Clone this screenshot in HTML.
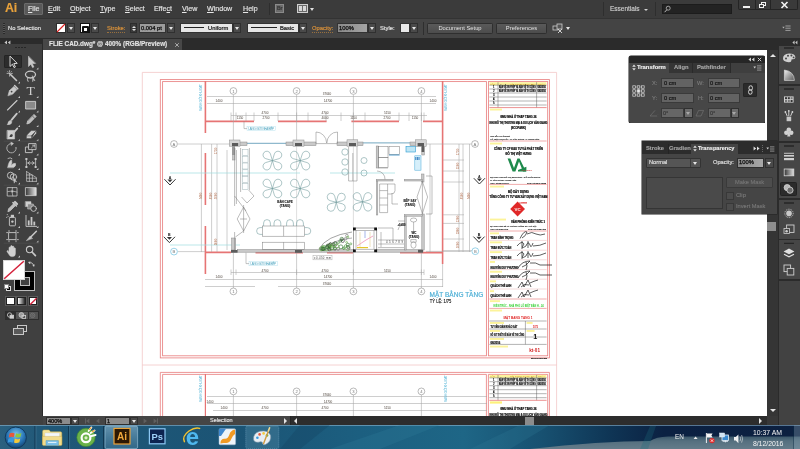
<!DOCTYPE html>
<html lang="vi"><head><meta charset="utf-8"><title>FLIE CAD.dwg @ 400% (RGB/Preview)</title>
<style>
html,body{margin:0;padding:0}
body{-webkit-font-smoothing:antialiased;width:800px;height:449px;overflow:hidden;position:relative;background:#fff;font-family:"Liberation Sans",sans-serif;color:#d6d6d6}
.a{position:absolute}
.t{position:absolute;white-space:nowrap;line-height:1;-webkit-text-stroke:0.14px}
#menubar{left:0;top:0;width:800px;height:18px;background:#3b3b3b}
#ctrl{left:0;top:18px;width:800px;height:20px;background:#444;border-top:1px solid #333;box-sizing:border-box}
#tabbar{left:0;top:38px;width:800px;height:12px;background:#2b2b2b}
#tools{left:0;top:44px;width:43px;height:381px;background:#404040}
#canvas{left:43px;top:50px;width:724px;height:366px;background:#fff;overflow:hidden}
#canvas svg,.t,.btn,svg.a{will-change:transform}
#vscroll{left:767px;top:50px;width:11px;height:375px;background:#353535}
#dock{left:778px;top:38px;width:22px;height:387px;background:#2b2b2b}
#hscroll{left:43px;top:416px;width:724px;height:9px;background:#2d2d2d}
#taskbar{left:0;top:425px;width:800px;height:24px;background:linear-gradient(90deg,#2b607f 0%,#1f5777 6%,#1b5475 30%,#1c5f80 45%,#1e6686 58%,#175070 68%,#0f3656 76%,#0b2142 83%,#0c2040 100%)}
.mi{font-size:7.1px;color:#e6e6e6;top:5.6px}
.mi u{text-decoration-thickness:0.6px;text-underline-offset:1px}
.dd{background:#4a4a4a;border:1px solid #303030;box-sizing:border-box}
.dd:after{content:"";position:absolute;left:50%;top:50%;margin:-1px 0 0 -2.5px;border:2.5px solid transparent;border-top:3px solid #e6e6e6;border-bottom:0}
.dg:after{border-top-color:#a8a8a8}
.btn{background:linear-gradient(#5a5a5a,#4c4c4c);border:1px solid #2f2f2f;box-sizing:border-box;border-radius:1.5px;font-size:5.8px;color:#e2e2e2;text-align:center}
.fld{background:#3a3a3a;border:1px solid #2e2e2e;box-sizing:border-box;font-size:5.7px;color:#aaa}
.pnl{background:#464646}
</style></head><body>

<!-- ================= canvas with drawing ================= -->
<div class="a" id="canvas">
<svg width="724" height="366" viewBox="43 50 724 366" style="position:absolute;left:0;top:0">
<g fill="none" stroke="#f3c6c6" stroke-width="0.8">
<path d="M142.3 72.4H556.6M142.3 72.4V416M556.6 72.4V416M142.3 365H556.6"/>
</g>
<g fill="none" stroke="#e88282" stroke-width="0.85">
<rect x="160.3" y="79.6" width="389.1" height="278.3"/>
<rect x="162.6" y="81.6" width="323.8" height="274.2"/>
<rect x="488.4" y="81.6" width="59.3" height="274.2"/>
<path d="M160.3 416V372.4H549.4V416M162.6 416V374.4H486.4V416M488.4 416V374.4H547.7V416"/>
</g>
<g fill="none" stroke="#e67474" stroke-width="1.6">
<path d="M205.4 81V133M205.4 153V205M205.4 226V274"/>
<path d="M205.4 121.4H254M278 121.4H326.6M351.4 121.4H399M423 121.4H442.6"/>
<path d="M442.6 81V264"/>
<path d="M205.4 252.4H231M255.5 252.6H303M327 252.6H353M400 252.6H442.6"/>
</g>
<path d="M205.4 374V416" stroke="#e67474" stroke-width="1.2" fill="none"/>
<g fill="none" stroke="#a6a6a6" stroke-width="0.55">
<path d="M207 96.5H436M207 103.5H436M231 115.5H427"/>
<path d="M231 272.5H424M205 279.5H443M205 286.5H255M278 286.5H443"/>
<path d="M207 396.5H487M207 403.5H487M213 410.5H487"/>
<path d="M233.4 95V141M233.4 253V288M233.4 395V416"/>
<path d="M296.6 95V141M296.6 253V288M296.6 395V416"/>
<path d="M353.4 95V141M353.4 253V288M353.4 395V416"/>
<path d="M421.4 95V141M421.4 253V288M421.4 395V416"/>
<path d="M296.6 141V253M353.4 141V228" stroke="#c4c4c4"/>
<path d="M178 144H231M178 251.6H205M426 144H471M426 251.4H471"/>
<path d="M201.4 144V252M211.6 144V252M217 144V252M227 150V250"/>
<path d="M459 144V252M463 144V252M469.5 144V252M430 144V252"/>
<path d="M443 214.8H464M443 223.4H464M443 239H464M443 250.6H472M443 160H464M443 182H464M443 171H464"/>
<path d="M442.6 264V287"/>
<path d="M231 112.5V121"/>
<path d="M236 112.5V121"/>
<path d="M246 112.5V121"/>
<path d="M254 112.5V121"/>
<path d="M278 112.5V121"/>
<path d="M296.6 112.5V121"/>
<path d="M308 112.5V121"/>
<path d="M326 112.5V121"/>
<path d="M341 112.5V121"/>
<path d="M353.4 112.5V121"/>
<path d="M365 112.5V121"/>
<path d="M399 112.5V121"/>
<path d="M409 112.5V121"/>
<path d="M421.4 112.5V121"/>
<path d="M424 112.5V121"/>
<path d="M231 269.5V275"/>
<path d="M236 269.5V275"/>
<path d="M296.6 269.5V275"/>
<path d="M353.4 269.5V275"/>
<path d="M421.4 269.5V275"/>
<path d="M424 269.5V275"/>
</g>
<g fill="none" stroke="#9fdde0" stroke-width="0.7">
<path d="M170 173H300M330 173H395M170 245H240"/>
</g>
<g fill="none" stroke="#58b6d8" stroke-width="0.8">
<path d="M247 143.3H286M363 142.8H410" stroke="#8fb9cd" stroke-width="1.3"/>
<rect x="249" y="261.6" width="28.4" height="4.2" stroke-width="0.4" stroke="#a8dcec"/>
<rect x="247" y="126.5" width="28.4" height="4.2" stroke-width="0.4" stroke="#a8dcec"/>
</g>
<path d="M244 121.4V128.6H247M246 252.6V263.6H249" fill="none" stroke="#888" stroke-width="0.5"/>
<rect x="313" y="255.6" width="19" height="4.2" fill="none" stroke="#aaa" stroke-width="0.5"/>
<g fill="#fff" stroke="#8c8c8c" stroke-width="0.6">
<circle cx="233.4" cy="91" r="3.4"/>
<circle cx="233.4" cy="291.4" r="3.4"/>
<circle cx="233.4" cy="391.4" r="3.4"/>
<circle cx="296.6" cy="91" r="3.4"/>
<circle cx="296.6" cy="291.4" r="3.4"/>
<circle cx="296.6" cy="391.4" r="3.4"/>
<circle cx="353.4" cy="91" r="3.4"/>
<circle cx="353.4" cy="291.4" r="3.4"/>
<circle cx="353.4" cy="391.4" r="3.4"/>
<circle cx="421.4" cy="91" r="3.4"/>
<circle cx="421.4" cy="291.4" r="3.4"/>
<circle cx="421.4" cy="391.4" r="3.4"/>
<circle cx="174" cy="144" r="3.4"/><circle cx="475" cy="144" r="3.4"/>
<circle cx="174" cy="251.6" r="3.4" stroke="#58b6d8"/><circle cx="475.3" cy="251.2" r="3.4" stroke="#58b6d8"/>
</g>
<g font-family="Liberation Sans, sans-serif" font-size="4.2" fill="#777" text-anchor="middle">
<text x="233.4" y="92.5">1</text>
<text x="233.4" y="292.9">1</text>
<text x="233.4" y="392.9">1</text>
<text x="296.6" y="92.5">2</text>
<text x="296.6" y="292.9">2</text>
<text x="296.6" y="392.9">2</text>
<text x="353.4" y="92.5">3</text>
<text x="353.4" y="292.9">3</text>
<text x="353.4" y="392.9">3</text>
<text x="421.4" y="92.5">4</text>
<text x="421.4" y="292.9">4</text>
<text x="421.4" y="392.9">4</text>
<text x="174" y="145.5">A</text><text x="475" y="145.5">A</text><text x="174" y="253.1">B</text><text x="475.3" y="252.7">B</text>
</g>
<g transform="translate(170,180)"><path d="M-5.6 -0.8L0 5L5.6 -0.8" fill="none" stroke="#2a2a2a" stroke-width="0.95"/><path d="M-2.6 -0.6H2.6L0 2.2Z" fill="#333"/><text x="0" y="-1.4" font-size="3.6" font-weight="bold" text-anchor="middle" fill="#111" font-family="Liberation Sans, sans-serif">A</text></g>
<g transform="translate(169.4,237.6)"><path d="M-5.6 -0.8L0 5L5.6 -0.8" fill="none" stroke="#2a2a2a" stroke-width="0.95"/><path d="M-2.6 -0.6H2.6L0 2.2Z" fill="#333"/><text x="0" y="-1.4" font-size="3.6" font-weight="bold" text-anchor="middle" fill="#111" font-family="Liberation Sans, sans-serif">B</text></g>
<g transform="translate(479.4,179)"><path d="M-5.6 -0.8L0 5L5.6 -0.8" fill="none" stroke="#2a2a2a" stroke-width="0.95"/><path d="M-2.6 -0.6H2.6L0 2.2Z" fill="#333"/><text x="0" y="-1.4" font-size="3.6" font-weight="bold" text-anchor="middle" fill="#111" font-family="Liberation Sans, sans-serif">A</text></g>
<g transform="translate(479,237.4)"><path d="M-5.6 -0.8L0 5L5.6 -0.8" fill="none" stroke="#2a2a2a" stroke-width="0.95"/><path d="M-2.6 -0.6H2.6L0 2.2Z" fill="#333"/><text x="0" y="-1.4" font-size="3.6" font-weight="bold" text-anchor="middle" fill="#111" font-family="Liberation Sans, sans-serif">B</text></g>
<g fill="#c9c9c9" stroke="#8a8a8a" stroke-width="0.5">
<rect x="239" y="142" width="8" height="3.6"/><rect x="286" y="142" width="30" height="3.6"/>
<rect x="337" y="142" width="11" height="3.6"/><rect x="357" y="142" width="6" height="3.6"/><rect x="410" y="142" width="6" height="3.6"/>
<rect x="237.5" y="249.6" width="116" height="2.6"/><rect x="377" y="249.6" width="46" height="2.6"/>
<rect x="232.6" y="148" width="2.4" height="12"/><rect x="231.6" y="238" width="4" height="12"/>
<rect x="421.8" y="147" width="2.6" height="8"/><rect x="421.6" y="174" width="2.4" height="8"/><rect x="421.8" y="214" width="2.4" height="36"/>
<rect x="376.2" y="146" width="2.2" height="22"/><rect x="376.4" y="179.4" width="16.6" height="1.6"/><rect x="404.5" y="179.4" width="18" height="1.6"/>
<rect x="376.4" y="181" width="1.4" height="34"/>
<rect x="404.6" y="214.6" width="18" height="1.6"/><rect x="404.6" y="216" width="1.6" height="34"/>
</g>
<g fill="#d6d6d6" stroke="#8c8c8c" stroke-width="0.5">
<rect x="229.5" y="140" width="10.5" height="6.2"/>
<rect x="293" y="140" width="11" height="6.2"/>
<rect x="347" y="139.8" width="10.8" height="6.4"/>
<rect x="415.4" y="139.8" width="10.8" height="6.6"/>
</g>
<g fill="#5c5c5c" stroke="none">
<rect x="232" y="143" width="6.2" height="3"/>
<rect x="232" y="146" width="2.6" height="9"/>
<rect x="295" y="143" width="7" height="3"/>
<rect x="349" y="143" width="7" height="3"/>
<rect x="417.6" y="143" width="6.4" height="3.2"/>
<rect x="421.6" y="146" width="2.6" height="6"/>
<rect x="231" y="250" width="6.5" height="2.8"/>
<rect x="295" y="250" width="7" height="2.8"/>
<rect x="418" y="249.8" width="5" height="2.8"/>
</g>
<rect x="232" y="146" width="2.6" height="9" fill="#9a9a9a"/>
<g fill="none" stroke="#7a7a7a" stroke-width="0.5">
<path d="M234.6 148V206M236.4 150V204M234.6 232V250"/>
<path d="M316 143.6H337M316 132V143.6M337.5 132V143.6M316 132A10.6 11 0 0 1 326.6 143M337.5 132A10.6 11 0 0 0 326.9 143"/>
<path d="M243.6 207L237.2 219L243.6 231L250 219Z M243.6 205V233 M240 219H247"/>
<path d="M422.4 181.5L417 197L422.4 213.6L427.6 197Z M422.4 181V214"/>
<path d="M426 176H432V214H426"/>
<path d="M234.6 196L246 211 M248.6 190L254 196L247 203L241.6 197 M243.6 231L235.4 237"/>
<rect x="242.4" y="149.4" width="5.6" height="6" stroke="#9fb4b8"/>
<rect x="242.4" y="156.2" width="5.6" height="6" stroke="#9fb4b8"/>
<rect x="242.4" y="163.0" width="5.6" height="6" stroke="#9fb4b8"/>
<rect x="242.4" y="169.8" width="5.6" height="6" stroke="#9fb4b8"/>
<rect x="242.4" y="176.6" width="5.6" height="6" stroke="#9fb4b8"/>
<rect x="242.4" y="183.4" width="5.6" height="6" stroke="#9fb4b8"/>
<path d="M240.6 148V192M249.4 148V190"/>
<rect x="262.5" y="226" width="42.2" height="10.2"/><path d="M283.6 226V236.2"/>
<rect x="262.5" y="242.2" width="42.2" height="7.2"/><path d="M283.6 242.2V249.4"/>
<path d="M348.6 147V181H357V147 M352.8 153V181"/>
<rect x="378.6" y="146.4" width="9.4" height="11"/><rect x="378.6" y="157.4" width="9.4" height="10"/><rect x="389" y="146.4" width="10.6" height="8"/>
<path d="M378 168H388 M377 171A8 8 0 0 1 385 179.4"/>
<path d="M379.6 184H395V190.6Q395 194 391 194H387.6V212.6H379.6Z M387.6 184V194M379.6 190.6H387.6M379.6 198H387.6M379.6 205H387.6"/>
<path d="M392 193V204H398"/>
<ellipse cx="413.6" cy="220" rx="3.2" ry="2"/><path d="M410.8 239.6h5.4v2.6h-5.4z"/><ellipse cx="413.5" cy="245" rx="2.6" ry="3.2"/>
<path d="M413.6 222V232 M398 221H405 M404.6 224A8 8 0 0 0 398 230"/>
<path d="M378 228H393V240 M381 232V247M378 240H404 M378 244H404M378 247.6H404"/>
</g>
<text x="386" y="242.6" font-family="Liberation Sans, sans-serif" font-size="2.8" fill="#333" textLength="17">4 5 6 7 8 9</text>
<g fill="none" stroke="#6a9698" stroke-width="0.55">
<path d="M272.40 160.60L265.73 158.65A3.8 3.8 0 1 1 270.45 153.93Z"/><path d="M272.40 160.60L270.45 167.27A3.8 3.8 0 1 1 265.73 162.55Z"/><path d="M272.40 160.60L274.35 153.93A3.8 3.8 0 1 1 279.07 158.65Z"/><path d="M272.40 160.60L279.07 162.55A3.8 3.8 0 1 1 274.35 167.27Z"/>
<path d="M300.15 160.60L293.27 158.66A3.8 3.8 0 1 1 297.91 153.81Z"/><path d="M300.15 160.60L297.91 167.39A3.8 3.8 0 1 1 293.27 162.54Z"/><path d="M300.15 160.60L302.39 153.81A3.8 3.8 0 1 1 307.03 158.66Z"/><path d="M300.15 160.60L307.03 162.54A3.8 3.8 0 1 1 302.39 167.39Z"/>
<path d="M272.40 188.50L265.78 186.66A3.8 3.8 0 1 1 270.44 181.92Z"/><path d="M272.40 188.50L270.44 195.08A3.8 3.8 0 1 1 265.78 190.34Z"/><path d="M272.40 188.50L274.36 181.92A3.8 3.8 0 1 1 279.02 186.66Z"/><path d="M272.40 188.50L279.02 190.34A3.8 3.8 0 1 1 274.36 195.08Z"/>
<path d="M300.15 188.50L293.32 186.67A3.8 3.8 0 1 1 297.90 181.79Z"/><path d="M300.15 188.50L297.90 195.21A3.8 3.8 0 1 1 293.32 190.33Z"/><path d="M300.15 188.50L302.40 181.79A3.8 3.8 0 1 1 306.98 186.67Z"/><path d="M300.15 188.50L306.98 190.33A3.8 3.8 0 1 1 302.40 195.21Z"/>
<path d="M336.25 202.25L330.07 200.68A3.8 3.8 0 1 1 334.68 196.07Z"/><path d="M336.25 202.25L334.68 208.43A3.8 3.8 0 1 1 330.07 203.82Z"/><path d="M336.25 202.25L337.82 196.07A3.8 3.8 0 1 1 342.43 200.68Z"/><path d="M336.25 202.25L342.43 203.82A3.8 3.8 0 1 1 337.82 208.43Z"/>
<path d="M362.50 201.85L355.99 200.06A3.8 3.8 0 1 1 360.66 195.36Z"/><path d="M362.50 201.85L360.66 208.34A3.8 3.8 0 1 1 355.99 203.64Z"/><path d="M362.50 201.85L364.34 195.36A3.8 3.8 0 1 1 369.01 200.06Z"/><path d="M362.50 201.85L369.01 203.64A3.8 3.8 0 1 1 364.34 208.34Z"/>
<circle cx="345" cy="152" r="3.2"/>
<circle cx="345" cy="162" r="3.2"/>
<circle cx="345" cy="172" r="3.2"/>
<circle cx="364" cy="160.5" r="3"/>
<circle cx="364" cy="173" r="3"/>
<path d="M263.6 226V223A3.4 3.4 0 0 1 270.4 223V226"/>
<path d="M274.0 226V223A3.4 3.4 0 0 1 280.79999999999995 223V226"/>
<path d="M286.6 226V223A3.4 3.4 0 0 1 293.4 223V226"/>
<path d="M296.6 226V223A3.4 3.4 0 0 1 303.4 223V226"/>
<path d="M262.5 227.6H260A3.4 3.4 0 0 0 260 234.4H262.5 M304.7 227.6H307.4A3.4 3.4 0 0 1 307.4 234.4H304.7"/>
</g>
<rect x="406" y="146.6" width="9.4" height="5.4" fill="#bfe6f5" stroke="#2a9ad0" stroke-width="0.6"/>
<rect x="414.8" y="155.8" width="6.2" height="14.4" fill="#d6effa" stroke="#49a9d8" stroke-width="0.5"/>
<path d="M415.8 157v3M417.4 157v3M419 157v3" stroke="#1f6fb8" stroke-width="0.9"/>
<path d="M389 155H399.6" stroke="#2a86c0" stroke-width="0.8"/>
<g>
<rect x="353.4" y="228" width="23.4" height="24" fill="#fff" stroke="#444" stroke-width="0.5"/>
<rect x="356" y="230.6" width="18" height="18.6" fill="none" stroke="#777" stroke-width="0.5"/>
<rect x="353" y="227.6" width="2.8" height="2.8" fill="#111"/>
<rect x="374.2" y="227.6" width="2.8" height="2.8" fill="#111"/>
<rect x="353" y="249.4" width="2.8" height="2.8" fill="#111"/>
<rect x="374.2" y="249.4" width="2.8" height="2.8" fill="#111"/>
<path d="M357 246L366 240L373 236" stroke="#e86aa0" stroke-width="0.6" fill="none"/>
<path d="M357 247.6H368" stroke="#e6c52a" stroke-width="1.2"/>
<path d="M360 232V247M370 232V247" stroke="#d9c27a" stroke-width="0.5"/>
<path d="M365 231V238" stroke="#4a6ad0" stroke-width="0.5"/>
</g>
<g fill="none" stroke-width="0.6">
<circle cx="327.6" cy="245.6" r="1.4" stroke="#333"/>
<circle cx="322.9" cy="247.6" r="1.6" stroke="#6ab04a"/>
<circle cx="345.6" cy="246.0" r="1.2" stroke="#4c9a3c"/>
<circle cx="331.5" cy="247.7" r="2.0" stroke="#6ab04a"/>
<circle cx="326.9" cy="248.8" r="2.0" stroke="#6ab04a"/>
<circle cx="345.6" cy="238.7" r="1.3" stroke="#777"/>
<circle cx="347.8" cy="248.5" r="2.0" stroke="#6ab04a"/>
<circle cx="322.8" cy="248.5" r="1.8" stroke="#4c9a3c"/>
<circle cx="328.0" cy="246.0" r="1.3" stroke="#4c9a3c"/>
<circle cx="346.9" cy="235.6" r="1.3" stroke="#777"/>
<circle cx="348.2" cy="246.9" r="1.6" stroke="#2f6f2f"/>
<circle cx="333.6" cy="244.2" r="1.5" stroke="#333"/>
<circle cx="329.8" cy="248.1" r="1.0" stroke="#3a8a3a"/>
<circle cx="334.8" cy="249.0" r="1.6" stroke="#777"/>
<circle cx="335.1" cy="244.0" r="2.2" stroke="#333"/>
<circle cx="322.1" cy="248.9" r="1.7" stroke="#2f6f2f"/>
<circle cx="328.8" cy="246.2" r="1.9" stroke="#6ab04a"/>
<circle cx="340.3" cy="240.9" r="1.3" stroke="#3a8a3a"/>
<circle cx="342.7" cy="240.8" r="1.7" stroke="#333"/>
<circle cx="323.9" cy="248.9" r="1.3" stroke="#3a8a3a"/>
<circle cx="321.4" cy="248.8" r="2.1" stroke="#6ab04a"/>
<circle cx="343.5" cy="248.5" r="0.9" stroke="#6ab04a"/>
<circle cx="330.3" cy="244.6" r="1.7" stroke="#4c9a3c"/>
<circle cx="341.8" cy="239.0" r="1.7" stroke="#2f6f2f"/>
<circle cx="329.3" cy="245.5" r="1.7" stroke="#333"/>
<circle cx="330.6" cy="243.7" r="1.0" stroke="#333"/>
<circle cx="331.7" cy="247.9" r="2.2" stroke="#4c9a3c"/>
<circle cx="323.1" cy="249.0" r="1.5" stroke="#333"/>
<circle cx="323.6" cy="247.3" r="1.9" stroke="#4c9a3c"/>
<circle cx="341.7" cy="239.8" r="1.0" stroke="#2f6f2f"/>
<circle cx="338.6" cy="242.7" r="0.9" stroke="#4c9a3c"/>
<circle cx="329.4" cy="249.0" r="1.7" stroke="#333"/>
<circle cx="335.3" cy="243.2" r="1.4" stroke="#3a8a3a"/>
<circle cx="327.0" cy="247.0" r="1.7" stroke="#2f6f2f"/>
<circle cx="346.6" cy="242.3" r="0.9" stroke="#6ab04a"/>
<circle cx="328.1" cy="247.1" r="1.9" stroke="#2f6f2f"/>
<circle cx="347.8" cy="237.1" r="1.0" stroke="#6ab04a"/>
<circle cx="338.1" cy="248.9" r="1.4" stroke="#777"/>
<circle cx="340.9" cy="246.8" r="1.9" stroke="#2f6f2f"/>
<circle cx="332.4" cy="245.5" r="2.1" stroke="#4c9a3c"/>
<circle cx="348.8" cy="247.9" r="1.3" stroke="#777"/>
<circle cx="335.1" cy="248.3" r="1.3" stroke="#2f6f2f"/>
<circle cx="336.9" cy="246.1" r="1.8" stroke="#6ab04a"/>
<circle cx="330.8" cy="245.7" r="1.5" stroke="#6ab04a"/>
<circle cx="350.8" cy="243.9" r="1.0" stroke="#4c9a3c"/>
<circle cx="324.1" cy="248.9" r="1.8" stroke="#3a8a3a"/>
<circle cx="347.8" cy="244.7" r="1.5" stroke="#2f6f2f"/>
<circle cx="343.9" cy="248.1" r="1.2" stroke="#3a8a3a"/>
<path d="M319 249Q326 236 352 232" stroke="#666"/><path d="M324 249Q332 240 352 238" stroke="#777"/>
</g>
<g transform="translate(0,0.9)" font-family="Liberation Sans, sans-serif" font-size="3.1" fill="#4c423a" text-anchor="middle">
<text x="327" y="94.6">37640</text>
<text x="328" y="101.6">14700</text>
<text x="219" y="101.6">1400</text>
<text x="433" y="101.6">1400</text>
<text x="265" y="113.2">4700</text>
<text x="325" y="113.2">4700</text>
<text x="387.4" y="113.2">5150</text>
<text x="240" y="118.6">1150</text>
<text x="266" y="118.6">2700</text>
<text x="325" y="118.6">4000</text>
<text x="353.6" y="118.6">1150</text>
<text x="387" y="118.6">2700</text>
<text x="415" y="118.6">1150</text>
<text x="265" y="270.8">4700</text>
<text x="325" y="270.8">4700</text>
<text x="387.4" y="270.8">5150</text>
<text x="219" y="277.4">1400</text>
<text x="328" y="277.4">14700</text>
<text x="433" y="277.4">1400</text>
<text x="327" y="284.4">37640</text>
<text x="327" y="394.8">37640</text>
<text x="328" y="401.8">14700</text>
<text x="210" y="401.8">1400</text>
<text x="224" y="408.4">1400</text>
<text x="265" y="408.4">4700</text>
<text x="325" y="408.4">4700</text>
<text x="387.4" y="408.4">5150</text>
</g>
<g transform="translate(1,0)" font-family="Liberation Sans, sans-serif" font-size="3" fill="#b06a4a" text-anchor="middle">
<text transform="translate(200.6,196) rotate(-90)">9400</text>
<text transform="translate(210.6,196) rotate(-90)">8100</text>
<text transform="translate(216,196) rotate(-90)">5600</text>
<text transform="translate(216,151) rotate(-90)">1750</text>
<text transform="translate(216,242) rotate(-90)">1000</text>
<text transform="translate(458,219) rotate(-90)">1200</text>
<text transform="translate(458,231) rotate(-90)">2300</text>
<text transform="translate(458,245) rotate(-90)">1600</text>
<text transform="translate(462.4,196) rotate(-90)">8100</text>
<text transform="translate(468.6,196) rotate(-90)">9400</text>
<text transform="translate(458,166) rotate(-90)">1500</text>
<text transform="translate(458,152) rotate(-90)">1750</text>
</g>
<g font-family="Liberation Sans, sans-serif" font-size="3.2" fill="#58b6d8">
<text transform="translate(201.8,111) rotate(-90)" textLength="27">RANH GIỚI KHU ĐẤT</text>
<text transform="translate(446.6,111) rotate(-90)" textLength="27">RANH GIỚI KHU ĐẤT</text>
<text transform="translate(201.8,402) rotate(-90)" textLength="27">RANH GIỚI KHU ĐẤT</text>
<text transform="translate(446.6,402) rotate(-90)" textLength="27">RANH GIỚI KHU ĐẤT</text>
<text x="250.4" y="264.8" textLength="25.6" font-size="2.9" fill="#3f9dba">LANG GIỚI NHÀ BẾP</text>
<text x="248.4" y="129.7" textLength="25.6" font-size="2.9" fill="#3f9dba">LANG GIỚI NHÀ BẾP</text>
</g>
<text x="314" y="258.8" font-family="Liberation Sans, sans-serif" font-size="2.8" fill="#444" textLength="17">±0.450 mm</text>
<g transform="translate(0,0.9)" font-family="Liberation Sans, sans-serif" font-size="3" font-weight="bold" fill="#222" stroke="#222" stroke-width="0.12" text-anchor="middle">
<text x="285" y="202.2">BÁN CAFE</text><text x="285" y="205.8">(TẦNG)</text>
<text x="410" y="201">BẾP SẠY</text><text x="410" y="204.8">(TẦNG)</text>
<text x="414" y="233.6">WC</text><text x="414" y="237">(TẦNG)</text>
<text x="401.4" y="225.4" font-size="2.6">+0.450</text>
</g>
<text x="429.6" y="297.3" font-family="Liberation Sans, sans-serif" font-size="6.9" fill="#4fb0d6" stroke="#4fb0d6" stroke-width="0.2" textLength="53.6" lengthAdjust="spacingAndGlyphs">MẶT BẰNG TẦNG</text>
<text x="429.8" y="303.3" font-family="Liberation Sans, sans-serif" font-size="4.5" fill="#222" stroke="#222" stroke-width="0.15" textLength="21.6" lengthAdjust="spacingAndGlyphs">TỶ LỆ: 1/75</text>
<rect x="489.6" y="82.2" width="56.8" height="3" fill="#fcf29c"/>
<g fill="none" stroke="#555" stroke-width="0.45">
<path d="M489.4 85.2H546.6"/>
<path d="M489.4 89.0H546.6"/>
<path d="M489.4 93.0H546.6"/>
<path d="M489.4 97.0H546.6"/>
<path d="M489.4 101.0H546.6"/>
<path d="M489.4 105.0H546.6"/>
<path d="M498 82.2V107.6M536.6 82.2V107.6"/>
</g>
<path d="M489.4 107.6H546.6" stroke="#e67474" stroke-width="0.8"/>
<g font-family="Liberation Sans, sans-serif" font-size="2.7" font-weight="bold" fill="#111" stroke="#111" stroke-width="0.18">
<text x="499" y="88.2" textLength="36.6" lengthAdjust="spacingAndGlyphs">BẢN VẼ XIN PHÉP VÀ BẢN VẼ THI CÔNG</text>
<text x="537.4" y="88.2" textLength="8.4" lengthAdjust="spacingAndGlyphs">08/2016</text>
<text x="499" y="92.1" textLength="36.6" lengthAdjust="spacingAndGlyphs">BẢN VẼ XIN PHÉP VÀ BẢN VẼ THI CÔNG</text>
<text x="537.4" y="92.1" textLength="8.4" lengthAdjust="spacingAndGlyphs">08/2016</text>
<text x="493" y="88.2" font-weight="normal">1</text>
<text x="493" y="92.1" font-weight="normal">2</text>
<text x="493" y="96.1" font-weight="normal">3</text>
<text x="493" y="100.1" font-weight="normal">4</text>
<text x="493" y="104.1" font-weight="normal">5</text>
</g>
<text x="490.4" y="84.6" font-family="Liberation Sans, sans-serif" font-size="2.4" fill="#d4a017">LẦN</text><text x="510" y="84.6" font-family="Liberation Sans, sans-serif" font-size="2.4" fill="#d4a017">NỘI DUNG CHỈNH SỬA</text><text x="538" y="84.6" font-family="Liberation Sans, sans-serif" font-size="2.4" fill="#d4a017">NGÀY</text>
<g fill="#fcf39a">
<rect x="490" y="108.6" width="12" height="1.9"/>
<rect x="490" y="142.6" width="12" height="1.9"/>
<rect x="490" y="185.6" width="14" height="1.9"/>
<rect x="490" y="218.6" width="16" height="1.9"/>
<rect x="490" y="232.4" width="9" height="1.9"/>
<rect x="490" y="241.4" width="12" height="1.9"/>
<rect x="490" y="251.2" width="12" height="1.9"/>
<rect x="490" y="261" width="5" height="1.9"/>
<rect x="490" y="270.8" width="12" height="1.9"/>
<rect x="490" y="280.4" width="6" height="1.9"/>
<rect x="490" y="290.2" width="4" height="1.9"/>
<rect x="490" y="300.2" width="10" height="1.9"/>
<rect x="490" y="309.6" width="12" height="1.9"/>
<rect x="490" y="322" width="14" height="1.9"/>
<rect x="526.6" y="322" width="6" height="1.9"/>
<rect x="490" y="330" width="10" height="1.9"/>
<rect x="526.6" y="330" width="8" height="1.9"/>
<rect x="490" y="338" width="14" height="1.9"/>
<rect x="490" y="345.6" width="18" height="1.9"/>
</g>
<g fill="none" stroke="#e67474" stroke-width="0.6">
<path d="M489.4 141H546.6M489.4 184.4H546.6M489.4 231H546.6M489.4 299H546.6M489.4 308.4H546.6"/>
</g>
<g fill="none" stroke="#e8b6b6" stroke-width="0.5">
<path d="M489.4 240.4H546.6M489.4 250.2H546.6M489.4 259.8H546.6M489.4 269.6H546.6M489.4 279.2H546.6M489.4 289H546.6"/>
</g>
<g fill="none" stroke="#666" stroke-width="0.5">
<path d="M489.4 321H546.6M489.4 329H546.6M489.4 337H546.6M489.4 344.4H546.6M525.4 321V344.4"/>
</g>
<g transform="translate(0,0.9)" font-family="Liberation Sans, sans-serif" font-weight="bold" fill="#111" stroke="#111" stroke-width="0.22" text-anchor="middle" font-size="3.2">
<text x="518.4" y="117.6" textLength="36" lengthAdjust="spacingAndGlyphs">ĐMU NHÀ Ở THẤP TẦNG 26</text>
<text x="518.4" y="123" textLength="58" lengthAdjust="spacingAndGlyphs">KHU ĐÔ THỊ THƯƠNG MẠI &amp; DU LỊCH VĂN GIANG</text>
<text x="518.4" y="128.2" textLength="15" lengthAdjust="spacingAndGlyphs">(ECOPARK)</text>
<text x="518.4" y="149.4" textLength="49" lengthAdjust="spacingAndGlyphs">CÔNG TY CP ĐẦU TƯ VÀ PHÁT TRIỂN</text>
<text x="518.4" y="154.6" textLength="26" lengthAdjust="spacingAndGlyphs">ĐÔ THỊ VIỆT HƯNG</text>
<text x="518.4" y="192" textLength="21" lengthAdjust="spacingAndGlyphs">BỘ XÂY DỰNG</text>
<text x="518.4" y="197.6" textLength="58" lengthAdjust="spacingAndGlyphs">TỔNG CÔNG TY TƯ VẤN XÂY DỰNG VIỆT NAM</text>
<text x="528" y="222.6" textLength="34" lengthAdjust="spacingAndGlyphs" font-size="2.8">VĂN PHÒNG KIẾN TRÚC 1</text>
</g>
<g transform="translate(0,0.9)" font-family="Liberation Sans, sans-serif" font-weight="bold" fill="#222" stroke="#222" stroke-width="0.1" font-size="2.5">
<text x="490.2" y="135.8" textLength="20" lengthAdjust="spacingAndGlyphs">CHỦ ĐẦU TƯ: ÔNG/BÀ</text>
<text x="490.2" y="139.4" textLength="49" lengthAdjust="spacingAndGlyphs">LÔ, BIỆT THỰ SỐ: - TT VĂN GIANG - T. HƯNG YÊN</text>
<text x="490.2" y="176.8" textLength="50" lengthAdjust="spacingAndGlyphs">ĐỊA CHỈ: KHU ĐÔ THỊ ECOPARK - XÃ XUÂN QUAN</text>
<text x="490.2" y="179.8" textLength="26" lengthAdjust="spacingAndGlyphs">H. VĂN GIANG - HƯNG YÊN</text>
<text x="490.2" y="183" textLength="19" lengthAdjust="spacingAndGlyphs">TEL: 04-6275 6677</text>
<text x="490.2" y="226" textLength="46" lengthAdjust="spacingAndGlyphs">ĐỊA CHỈ: 243A ĐÊ LA THÀNH - ĐỐNG ĐA - HÀ NỘI</text>
<text x="490.2" y="229.4" textLength="18" lengthAdjust="spacingAndGlyphs">TEL: 04-37667476</text>
<text x="546" y="183" text-anchor="end" textLength="19" lengthAdjust="spacingAndGlyphs">FAX: 04-6275 6688</text>
<text x="546" y="229.4" text-anchor="end" textLength="18" lengthAdjust="spacingAndGlyphs">FAX: 04-37667495</text>
</g>
<path d="M507.6 158.6L512.6 171.4H515.4L519 161.4L523 171.4H526L519.6 158.6H517.4L514 168L510.4 158.6Z" fill="#1f8a4c"/>
<path d="M518 170L526.4 166.8V171.4H518Z" fill="#1f8a4c"/>
<text x="521.6" y="170.8" font-family="Liberation Sans, sans-serif" font-size="2.2" fill="#c33" font-weight="bold">VIHAJICO</text>
<path d="M517.6 201.6L525 209L517.6 216.4L510.2 209Z" fill="#e02828"/>
<text x="517.6" y="211" font-family="Liberation Sans, sans-serif" font-size="4.4" fill="#fff" font-weight="bold" text-anchor="middle">VC</text>
<path d="M519 203H527" stroke="#e02828" stroke-width="0.8"/>
<text x="521" y="202.6" font-family="Liberation Sans, sans-serif" font-size="2.2" fill="#e02828" font-weight="bold">VNCC</text>
<g transform="translate(0,0.9)" font-family="Liberation Sans, sans-serif" font-weight="bold" fill="#111" stroke="#111" stroke-width="0.2" font-size="3.1">
<text x="490.4" y="238.6" textLength="23" lengthAdjust="spacingAndGlyphs">TRẦN BÌNH TRỌNG</text>
<text x="490.4" y="248" textLength="21" lengthAdjust="spacingAndGlyphs">TRẦN ĐỨC TOÀN</text>
<text x="490.4" y="258" textLength="21" lengthAdjust="spacingAndGlyphs">TRẦN ĐỨC TOÀN</text>
<text x="490.4" y="268" textLength="28" lengthAdjust="spacingAndGlyphs">NGUYỄN DUY PHƯƠNG</text>
<text x="490.4" y="277.6" textLength="28" lengthAdjust="spacingAndGlyphs">NGUYỄN DUY PHƯƠNG</text>
<text x="490.4" y="286.6" textLength="21" lengthAdjust="spacingAndGlyphs">QUÁCH THẾ ANH</text>
<text x="490.4" y="296.6" textLength="21" lengthAdjust="spacingAndGlyphs">QUÁCH THẾ ANH</text>
</g>
<g fill="none" stroke="#1a1a1a" stroke-width="0.7">
<path d="M520 238.6Q524 230 527 232Q526 236 522 238M527 234Q532 231 536 234Q540 236 545 234"/>
<path d="M517 246Q522 240 524 244Q520 250 526 246Q528 240 530 245Q531 249 533 243 M522 241V249M528 241V248M533 246Q540 246 546 243"/>
<path d="M517 256Q522 250 524 254Q520 260 526 256Q528 250 530 255Q531 259 533 253 M522 251V259M528 251V258M533 256Q540 256 546 253"/>
<path d="M518 268Q522 261 530 261Q526 266 522 267M526 262Q528 266 526 270M530 263Q536 262 540 265H552"/>
<path d="M518 278Q522 271 530 271Q526 276 522 277M526 272Q528 276 526 280M530 273Q536 272 540 275H552"/>
<path d="M518 288L522 282L524 287L528 280L531 287M521 287Q524 283 529 285M530 283Q534 281 538 280"/>
<path d="M518 298L522 292L524 297L528 290L531 297M521 297Q524 293 529 295M530 293Q534 291 538 290"/>
</g>
<text x="518.6" y="306.7" font-family="Liberation Sans, sans-serif" font-size="2.9" font-weight="bold" fill="#2fd02f" text-anchor="middle" textLength="50" lengthAdjust="spacingAndGlyphs">KIẾN TRÚC - NHÀ PHỐ LÔ BIỆT ĐÂN H - 24</text>
<text x="518" y="318.8" font-family="Liberation Sans, sans-serif" font-size="3" font-weight="bold" fill="#e02020" text-anchor="middle" textLength="29" lengthAdjust="spacingAndGlyphs">MẶT BẰNG TẦNG 1</text>
<g transform="translate(0,0.9)" font-family="Liberation Sans, sans-serif" font-weight="bold" fill="#111" stroke="#111" stroke-width="0.15" font-size="2.6">
<text x="490.4" y="327.4" textLength="27" lengthAdjust="spacingAndGlyphs">TƯ VẤN GIÁM KHẢO SÁT</text>
<text x="490.4" y="335.2" textLength="34" lengthAdjust="spacingAndGlyphs">HỒ SƠ THIẾT KẾ BẢN VẼ THI CÔNG</text>
<text x="490.4" y="343.2" textLength="10" lengthAdjust="spacingAndGlyphs">08/2016</text>
<text x="531" y="358.4" textLength="16" font-size="2" lengthAdjust="spacingAndGlyphs">MADE IN VNCC 2016</text>
</g>
<text x="535.4" y="327.6" font-family="Liberation Sans, sans-serif" font-size="2.8" font-weight="bold" fill="#e02020" text-anchor="middle">1/75</text>
<text x="535.4" y="339.1" font-family="Liberation Sans, sans-serif" font-size="6.6" font-weight="bold" fill="#111" stroke="#111" stroke-width="0.2" text-anchor="middle">1</text>
<text x="534.6" y="352" font-family="Liberation Sans, sans-serif" font-size="4.6" font-weight="bold" fill="#d42020" text-anchor="middle">kt-01</text>
<rect x="489.6" y="374.9" width="56.8" height="3" fill="#fcf29c"/>
<g fill="none" stroke="#555" stroke-width="0.45">
<path d="M489.4 377.9H546.6"/>
<path d="M489.4 381.7H546.6"/>
<path d="M489.4 385.7H546.6"/>
<path d="M489.4 389.7H546.6"/>
<path d="M489.4 393.7H546.6"/>
<path d="M489.4 397.7H546.6"/>
<path d="M498 374.9V400.3M536.6 374.9V400.3"/>
</g>
<path d="M489.4 400.3H546.6" stroke="#e67474" stroke-width="0.8"/>
<g font-family="Liberation Sans, sans-serif" font-size="2.7" font-weight="bold" fill="#111" stroke="#111" stroke-width="0.18">
<text x="499" y="380.9" textLength="36.6" lengthAdjust="spacingAndGlyphs">BẢN VẼ XIN PHÉP VÀ BẢN VẼ THI CÔNG</text>
<text x="537.4" y="380.9" textLength="8.4" lengthAdjust="spacingAndGlyphs">08/2016</text>
<text x="499" y="384.8" textLength="36.6" lengthAdjust="spacingAndGlyphs">BẢN VẼ XIN PHÉP VÀ BẢN VẼ THI CÔNG</text>
<text x="537.4" y="384.8" textLength="8.4" lengthAdjust="spacingAndGlyphs">08/2016</text>
<text x="493" y="380.9" font-weight="normal">1</text>
<text x="493" y="384.8" font-weight="normal">2</text>
<text x="493" y="388.8" font-weight="normal">3</text>
<text x="493" y="392.8" font-weight="normal">4</text>
<text x="493" y="396.8" font-weight="normal">5</text>
</g>
<text x="490.4" y="377.3" font-family="Liberation Sans, sans-serif" font-size="2.4" fill="#d4a017">LẦN</text><text x="510" y="377.3" font-family="Liberation Sans, sans-serif" font-size="2.4" fill="#d4a017">NỘI DUNG CHỈNH SỬA</text><text x="538" y="377.3" font-family="Liberation Sans, sans-serif" font-size="2.4" fill="#d4a017">NGÀY</text>
<g font-family="Liberation Sans, sans-serif" font-weight="bold" fill="#111" stroke="#111" stroke-width="0.22" text-anchor="middle" font-size="3.2">
<text x="518.4" y="410.4" textLength="36" lengthAdjust="spacingAndGlyphs">ĐMU NHÀ Ở THẤP TẦNG 26</text>
<text x="518.4" y="415.6" textLength="58" lengthAdjust="spacingAndGlyphs">KHU ĐÔ THỊ THƯƠNG MẠI &amp; DU LỊCH VĂN GIANG</text>
</g>
<rect x="490" y="401.4" width="12" height="2.2" fill="#fdf17a"/>
</svg>
</div>

<!-- ================= menu bar ================= -->
<div class="a" id="menubar"></div>
<div class="t" style="left:4.6px;top:2.4px;font-size:12.4px;font-weight:bold;color:#e9a23b;letter-spacing:-0.2px">Ai</div>
<div class="a" style="left:24px;top:3px;width:19px;height:12px;background:#595959;border:1px solid #6b6b6b;box-sizing:border-box;border-radius:1px"></div>
<div class="t mi" style="left:28px"><u>F</u>ile</div>
<div class="t mi" style="left:48px"><u>E</u>dit</div>
<div class="t mi" style="left:70px"><u>O</u>bject</div>
<div class="t mi" style="left:100px"><u>T</u>ype</div>
<div class="t mi" style="left:125px"><u>S</u>elect</div>
<div class="t mi" style="left:154px">Effe<u>c</u>t</div>
<div class="t mi" style="left:182px"><u>V</u>iew</div>
<div class="t mi" style="left:207px"><u>W</u>indow</div>
<div class="t mi" style="left:243px"><u>H</u>elp</div>
<div class="a" style="left:269px;top:3px;width:1px;height:12px;background:#2e2e2e"></div>
<div class="a" style="left:275px;top:4px;width:9px;height:9px;background:#6b6b6b;border:1px solid #8a8a8a;box-sizing:border-box"></div>
<div class="t" style="left:276.5px;top:6px;font-size:5px;color:#333;font-weight:bold">Br</div>
<div class="a" style="left:297px;top:4px;width:11px;height:9px;border:1px solid #cfcfcf;box-sizing:border-box;background:#6a6a6a"></div>
<div class="a" style="left:299px;top:6px;width:3px;height:5px;background:#d8d8d8"></div>
<div class="a" style="left:303px;top:6px;width:3px;height:5px;background:#d8d8d8"></div>
<div class="a" style="left:310px;top:8px;border:2.5px solid transparent;border-top:3px solid #e0e0e0;border-bottom:0"></div>
<div class="a" style="left:603px;top:2px;width:1px;height:14px;background:#2e2e2e"></div>
<div class="t" style="left:609.5px;top:6px;font-size:6.5px;color:#d0d0d0">Essentials</div>
<div class="a" style="left:644px;top:9px;border:2px solid transparent;border-top:2.5px solid #d0d0d0;border-bottom:0"></div>
<div class="a" style="left:655px;top:2px;width:1px;height:14px;background:#2e2e2e"></div>
<div class="a" style="left:662px;top:4px;width:70px;height:10px;background:#232323;border:1px solid #1c1c1c;box-sizing:border-box"></div>
<svg class="a" style="left:663px;top:4px" width="10" height="10" viewBox="0 0 10 10"><circle cx="5.2" cy="4.2" r="2" fill="none" stroke="#bdbdbd" stroke-width="0.8"/><path d="M3.8 5.8L1.6 8.2" stroke="#bdbdbd" stroke-width="1"/></svg>
<!-- window buttons -->
<div class="a" style="left:738px;top:0;width:60px;height:10px;background:#3a3a3a;border:1px solid #242424;border-top:0;box-sizing:border-box;border-radius:0 0 2px 2px"></div>
<div class="a" style="left:755px;top:0;width:1px;height:10px;background:#242424"></div>
<div class="a" style="left:770px;top:0;width:1px;height:10px;background:#242424"></div>
<div class="a" style="left:743px;top:6px;width:7px;height:2px;background:#f0f0f0"></div>
<div class="a" style="left:760.5px;top:2px;width:5px;height:4px;border:1px solid #f0f0f0;box-sizing:border-box"></div>
<div class="a" style="left:758.5px;top:4px;width:5px;height:4px;border:1px solid #f0f0f0;box-sizing:border-box;background:#3a3a3a"></div>
<svg class="a" style="left:780px;top:1px" width="9" height="8" viewBox="0 0 9 8"><path d="M1.5 1L7.5 7M7.5 1L1.5 7" stroke="#f2f2f2" stroke-width="1.6"/></svg>

<!-- ================= control bar ================= -->
<div class="a" id="ctrl"></div>
<div class="a" style="left:3px;top:23px;width:2px;height:11px;background:repeating-linear-gradient(#2a2a2a 0 1px,#555 1px 2px)"></div>
<div class="t" style="left:8px;top:26.1px;font-size:5.8px;color:#e8e8e8">No Selection</div>
<div class="a" style="left:56px;top:23px;width:10px;height:10px;background:#fff;border:1px solid #2c2c2c;box-sizing:border-box"></div>
<svg class="a" style="left:56px;top:23px" width="10" height="10"><path d="M1 9L9 1" stroke="#d22" stroke-width="1.1"/></svg>
<div class="a dd" style="left:67px;top:23px;width:8px;height:10px"></div>
<div class="a" style="left:80px;top:23px;width:10px;height:10px;background:#fff;border:1px solid #111;box-sizing:border-box"></div>
<div class="a" style="left:81.5px;top:26.1px;width:7px;height:7px;border:2px solid #111;box-sizing:border-box;background:#fff;border-radius:1px"></div>
<div class="a dd" style="left:91px;top:23px;width:8px;height:10px"></div>
<div class="t" style="left:107px;top:26.1px;font-size:5.8px;color:#e0953a;border-bottom:0.5px dotted rgba(224,149,58,0.55)">Stroke:</div>
<div class="a" style="left:130px;top:23px;width:7px;height:10px;background:#3a3a3a;border:1px solid #2c2c2c;box-sizing:border-box"></div>
<div class="a" style="left:131.5px;top:26.1px;border:2px solid transparent;border-bottom:2.5px solid #e0e0e0;border-top:0"></div>
<div class="a" style="left:131.5px;top:29px;border:2px solid transparent;border-top:2.5px solid #e0e0e0;border-bottom:0"></div>
<div class="a" style="left:139px;top:23px;width:27px;height:10px;background:#9c9c9c;border:1px solid #333;box-sizing:border-box"></div>
<div class="t" style="left:141px;top:26.1px;font-size:5.8px;color:#000;-webkit-text-stroke:0.25px #111">0.004 pt</div>
<div class="a dd" style="left:167px;top:23px;width:8px;height:10px"></div>
<div class="a" style="left:180px;top:23px;width:53px;height:10px;background:#e6e6e6;border:1px solid #333;box-sizing:border-box"></div>
<div class="a" style="left:184px;top:27.4px;width:20px;height:1.1px;background:#222"></div>
<div class="t" style="left:207.5px;top:26.1px;font-size:5.8px;color:#000;-webkit-text-stroke:0.2px #222">Uniform</div>
<div class="a dd" style="left:233px;top:23px;width:8px;height:10px"></div>
<div class="a" style="left:247px;top:23px;width:52px;height:10px;background:#e6e6e6;border:1px solid #333;box-sizing:border-box"></div>
<div class="a" style="left:251px;top:27.4px;width:26px;height:1.1px;background:#222"></div>
<div class="t" style="left:279.5px;top:26.1px;font-size:5.8px;color:#000;-webkit-text-stroke:0.2px #222">Basic</div>
<div class="a dd" style="left:299px;top:23px;width:8px;height:10px"></div>
<div class="t" style="left:311.5px;top:26.1px;font-size:5.8px;color:#e0953a;border-bottom:0.5px dotted rgba(224,149,58,0.55)">Opacity:</div>
<div class="a" style="left:337px;top:23px;width:31px;height:10px;background:linear-gradient(90deg,#8a8a8a,#a4a4a4);border:1px solid #333;box-sizing:border-box"></div>
<div class="t" style="left:339px;top:26.1px;font-size:5.8px;color:#000;-webkit-text-stroke:0.25px #111">100%</div>
<div class="a dd" style="left:368px;top:23px;width:8px;height:10px"></div>
<div class="t" style="left:380px;top:26.1px;font-size:5.8px;color:#e8e8e8">Style:</div>
<div class="a" style="left:400px;top:23px;width:10px;height:10px;background:#e8e8e8;border:1px solid #333;box-sizing:border-box"></div>
<div class="a dd" style="left:410px;top:23px;width:8px;height:10px"></div>
<div class="a" style="left:423px;top:22px;width:1px;height:13px;background:#2e2e2e"></div>
<div class="a btn" style="left:427px;top:23px;width:66px;height:11px;line-height:9px">Document Setup</div>
<div class="a btn" style="left:496px;top:23px;width:51px;height:11px;line-height:9px">Preferences</div>
<svg class="a" style="left:552px;top:23px" width="12" height="11" viewBox="0 0 12 11"><rect x="1" y="3" width="5" height="4" fill="none" stroke="#ccc" stroke-width="0.8"/><rect x="5" y="1" width="5" height="5" fill="#555" stroke="#ccc" stroke-width="0.8"/><path d="M6 6L10 10M10 6L6 10" stroke="#ddd" stroke-width="0.9"/></svg>
<div class="a" style="left:566px;top:27px;border:2.5px solid transparent;border-top:3px solid #e6e6e6;border-bottom:0"></div>
<svg class="a" style="left:781.5px;top:25px" width="9" height="7" viewBox="0 0 9 7"><path d="M3.4 1H8.6M3.4 3.2H8.6M3.4 5.4H8.6" stroke="#b4b4b4" stroke-width="0.8"/><path d="M0.3 1.8H2.7L1.5 3.4Z" fill="#b4b4b4"/></svg>

<!-- ================= tab bar ================= -->
<div class="a" id="tabbar"></div>
<div class="a" style="left:43px;top:39px;width:139px;height:11px;background:#474747"></div>
<div class="t" style="left:48.6px;top:41.4px;font-size:6.37px;font-weight:bold;color:#e4e4e4">FLIE CAD.dwg* @ 400% (RGB/Preview)</div>
<svg class="a" style="left:173.5px;top:42px" width="6" height="6" viewBox="0 0 6 6"><path d="M1.2 1.2L4.8 4.8M4.8 1.2L1.2 4.8" stroke="#c4c4c4" stroke-width="0.8"/></svg>
<svg class="a" style="left:4px;top:39.5px" width="7" height="5" viewBox="0 0 7 5"><path d="M3 0.4V4.6L0.4 2.5ZM6.4 0.4V4.6L3.8 2.5Z" fill="#c4c4c4"/></svg>


<!-- ================= tools panel ================= -->
<div class="a" id="tools"></div>
<div class="a" style="left:42px;top:44px;width:1px;height:381px;background:#2a2a2a"></div>
<div class="a" style="left:15px;top:46.5px;width:12px;height:1.6px;background:repeating-linear-gradient(90deg,#262626 0 2px,#404040 2px 3px)"></div>
<div class="a" style="left:4px;top:55px;width:18px;height:13px;background:#2c2c2c;border:1px solid #242424;box-sizing:border-box;border-radius:1px"></div>
<svg class="a" style="left:0;top:44px" width="43" height="300" viewBox="0 44 43 300" fill="none" stroke="#c8c8c8" stroke-width="1" stroke-linecap="round" stroke-linejoin="round">
<!-- row1 selection / direct selection -->
<path d="M10 56.5V66.5L12.4 64.2L14 67.6L15.4 67L13.8 63.6L16.8 63.4Z" fill="#2c2c2c" stroke="#e8e8e8" stroke-width="0.9"/>
<path d="M28.5 56.5V66.5L30.9 64.2L32.5 67.6L33.9 67L32.3 63.6L35.3 63.4Z" fill="#c8c8c8" stroke="#c8c8c8" stroke-width="0.6"/>
<!-- row2 magic wand / lasso -->
<path d="M9.5 73.5L16.5 80.5" stroke-width="1.6"/><path d="M9.6 70.6V72M7 73.4H8.4M11.2 73.4H12.4M9.6 75V76.2M7.8 71.6L8.4 72.2M11.4 71.6L10.8 72.2" stroke-width="0.8"/>
<ellipse cx="30.5" cy="74.6" rx="5" ry="3.4" stroke-width="1.3"/><path d="M28 77.4Q26.6 79.6 28 81.4" stroke-width="1"/><path d="M32.5 76L35 81L33.6 79.6L32.8 81.4Z" fill="#c8c8c8" stroke-width="0.5"/>
<!-- row3 pen / type -->
<path d="M8 95.5L9.4 90.6L14 86.4L17 89.4L12.8 94Z" fill="#c8c8c8" stroke-width="0.6"/><circle cx="11.6" cy="91.6" r="0.9" fill="#404040" stroke="none"/><path d="M14.6 85.6L17.8 88.8" stroke-width="1.4"/>
<text x="30.5" y="95.2" font-family="Liberation Serif, serif" font-size="13.5" fill="#cfcfcf" stroke="none" text-anchor="middle">T</text>
<!-- row4 line / rect -->
<path d="M7.5 110L17 100.5" stroke-width="1.1"/>
<rect x="26" y="101.4" width="9.6" height="7.6" fill="#8a8a8a" stroke="#cfcfcf" stroke-width="0.9"/>
<!-- row5 brush / pencil -->
<path d="M16.8 113.6L11.6 119.8" stroke-width="1.8"/><path d="M7.6 124.6Q8 120.6 10.8 120.2Q12.6 121.6 11.4 123.4Q10 124.8 7.6 124.6Z" fill="#c8c8c8" stroke-width="0.5"/>
<path d="M34.2 114.6L36.2 116.6L29.6 123.2L26.8 124L27.6 121.2Z" fill="#bdbdbd" stroke-width="0.7"/><path d="M32.6 116.2L34.6 118.2" stroke="#404040" stroke-width="0.7"/>
<!-- row6 blob brush / eraser -->
<path d="M7.4 130.4H14.6V139H7.4Z" fill="#d0d0d0" stroke-width="0.6"/><path d="M17.4 128.4L13 133.4" stroke-width="1.6"/><path d="M9.4 137Q9.8 134.2 12 134Q13.4 135.2 12.4 136.4Q11.4 137.4 9.4 137Z" fill="#404040" stroke="none"/>
<path d="M26.4 135.6L31.2 130.6H36.4L31.6 135.6Z M26.4 135.6V138.6H31.6V135.6 M31.6 138.6L36.4 133.6V130.6" fill="#cfcfcf" stroke="#404040" stroke-width="0.5"/>
<!-- row7 rotate / scale -->
<path d="M16 147.4A4.6 4.6 0 1 1 11.6 143.6" stroke-width="0.9" stroke-dasharray="1.4 1"/><path d="M11 142L13.6 143.6L11.4 145.4Z" fill="#c8c8c8" stroke-width="0.4"/>
<rect x="25.8" y="147" width="6.4" height="5.6" stroke-width="0.9"/><rect x="29" y="143.6" width="7" height="6" stroke-width="0.9" fill="#404040"/><path d="M31.4 148L34.4 145.2M34.4 145.2H32.4M34.4 145.2V147" stroke-width="0.7"/>
<!-- row8 width / free transform -->
<path d="M7.6 167.4Q9 160.4 11.6 160Q12.6 163.4 11 165.6Q13.6 162.4 15.6 163.4Q16.4 166 13.6 167.6Z" fill="#cfcfcf" stroke-width="0.5"/><path d="M8 158.4Q10.4 157 12 158.6" stroke-width="0.8"/>
<path d="M26.4 159V167M35.6 159V167M28 163H34M28 163L29.6 161.6M28 163L29.6 164.4M34 163L32.4 161.6M34 163L32.4 164.4" stroke-width="0.8"/><rect x="25.4" y="158" width="2" height="2" fill="#c8c8c8" stroke="none"/><rect x="34.6" y="158" width="2" height="2" fill="#c8c8c8" stroke="none"/><rect x="25.4" y="166" width="2" height="2" fill="#c8c8c8" stroke="none"/><rect x="34.6" y="166" width="2" height="2" fill="#c8c8c8" stroke="none"/>
<!-- row9 shape builder / perspective grid -->
<circle cx="10.6" cy="175.4" r="3.2" stroke-width="0.9"/><circle cx="13.4" cy="177" r="3.2" stroke-width="0.9"/><path d="M13 176.6L16.6 182L15 181L14.4 182.8Z" fill="#c8c8c8" stroke-width="0.5"/>
<path d="M26.6 171.6V181.4H36.4M26.6 171.6L36.4 177.6V181.4M29.4 173.4V181.4M32.4 175.2V181.4M26.6 175H31.8M26.6 178.2H36.4" stroke-width="0.7"/>
<!-- row10 mesh / gradient -->
<rect x="7.6" y="187.6" width="9.4" height="8.4" stroke-width="0.8"/><path d="M7.6 191.6Q12.4 190 17 192M12.4 187.6Q11.2 191.6 12.8 196" stroke-width="0.7"/><circle cx="12.4" cy="191.4" r="1" fill="#c8c8c8" stroke="none"/>
<defs><linearGradient id="tg1" x1="0" x2="1"><stop offset="0" stop-color="#3a3a3a"/><stop offset="1" stop-color="#e8e8e8"/></linearGradient></defs>
<rect x="25.8" y="187.6" width="10.4" height="8" fill="url(#tg1)" stroke="#cfcfcf" stroke-width="0.8"/>
<!-- row11 eyedropper / blend -->
<path d="M8 211.4L8.6 208.8L13.4 204L15.2 205.8L10.4 210.6Z" stroke-width="0.8" fill="#bdbdbd"/><path d="M13 202.6L16.4 206" stroke-width="1.6"/><path d="M15 202L17 204" stroke-width="2.2"/>
<rect x="25.6" y="201.6" width="5.4" height="5" fill="#d0d0d0" stroke-width="0.5"/><rect x="28" y="204" width="5.4" height="5" fill="#8a8a8a" stroke="#c8c8c8" stroke-width="0.6"/><circle cx="33.6" cy="208.6" r="2.8" fill="#404040" stroke-width="0.9"/>
<!-- row12 symbol sprayer / graph -->
<rect x="9.4" y="217.4" width="6" height="8.4" rx="0.8" stroke-width="0.9"/><rect x="10.8" y="214.8" width="3.2" height="2.6" fill="#c8c8c8" stroke="none"/><circle cx="12.4" cy="221.6" r="1.2" fill="#c8c8c8" stroke="none"/><path d="M7.2 214.6h0.2M8 216.4h0.2M6.6 217.4h0.2" stroke-width="0.9"/>
<path d="M26 215.4V226.4H36.6" stroke-width="0.9"/><rect x="27.8" y="220.4" width="1.8" height="5" fill="#c8c8c8" stroke="none"/><rect x="30.6" y="217" width="1.8" height="8.4" fill="#c8c8c8" stroke="none"/><rect x="33.4" y="221.6" width="1.8" height="3.8" fill="#c8c8c8" stroke="none"/>
<!-- row13 artboard / slice -->
<rect x="9" y="232.6" width="7" height="7" stroke-width="0.9"/><path d="M6.6 232.6H8M17 232.6H18.4M6.6 239.6H8M17 239.6H18.4M9 230.4V231.6M16 230.4V231.6M9 240.6V241.8M16 240.6V241.8" stroke-width="0.8"/>
<path d="M26.6 240.4L30.2 236L32.4 238.2Z" fill="#c8c8c8" stroke-width="0.5"/><path d="M31 236.8L36.4 231.2" stroke-width="1.5"/>
<!-- row14 hand / zoom -->
<path d="M9 252.6V248Q9 247 9.8 247T10.6 248V251V246.6Q10.6 245.6 11.4 245.6T12.2 246.6V251V247Q12.2 246 13 246T13.8 247V251.4V248.6Q13.8 247.8 14.6 247.8T15.4 248.6V253.6Q15.4 256.6 12.6 256.6H11.6Q10 256.6 9 254.6L7 251.6Q6.8 250.6 7.8 250.6Z" fill="#d0d0d0" stroke="#d0d0d0" stroke-width="0.5"/>
<circle cx="29.6" cy="249.6" r="3.2" stroke-width="1.1"/><path d="M32 252L35.4 255.6" stroke-width="1.7"/>
<!-- small corner triangles -->
<g fill="#c8c8c8" stroke="none">
<path d="M38.4 67.4v2h-2z M20 81.6v2h-2z M20 96v2h-2zM38.4 96v2h-2z M20 110.6v2h-2zM38.4 110.6v2h-2z M20 125v2h-2zM38.4 125v2h-2z M20 139v2h-2zM38.4 139v2h-2z M20 153.6v2h-2zM38.4 153.6v2h-2z M20 168v2h-2zM38.4 168v2h-2z M20 182.6v2h-2zM38.4 182.6v2h-2z M20 211.6v2h-2zM38.4 211.6v2h-2z M20 226v2h-2zM38.4 226v2h-2z M38.4 240.6v2h-2z M20 255.6v2h-2z"/>
</g>
<!-- separators -->
<path d="M4 141.2H39M4 185.2H39M4 243.2H39" stroke="#4d4d4d" stroke-width="0.8"/>
</svg>
<!-- fill / stroke -->
<div class="a" style="left:14px;top:271px;width:21px;height:20px;background:#000;border:1px solid #bdbdbd;box-sizing:border-box"></div>
<div class="a" style="left:19.5px;top:276.5px;width:10px;height:9px;background:#404040;border:1px solid #bdbdbd;box-sizing:border-box"></div>
<div class="a" style="left:3px;top:260px;width:22px;height:20px;background:#fff;border:1px solid #d8d8d8;box-sizing:border-box"></div>
<svg class="a" style="left:3px;top:260px" width="22" height="20"><path d="M1.2 18.8L20.8 1.2" stroke="#d4203a" stroke-width="1.5"/></svg>
<svg class="a" style="left:27px;top:260px" width="9" height="9" viewBox="0 0 9 9"><path d="M2 3Q5 1.6 6.6 5" stroke="#cfcfcf" stroke-width="0.9" fill="none"/><path d="M1 2L3.6 1.6L2.6 4Z M5.4 5L7.8 4.6L7 7Z" fill="#cfcfcf"/></svg>
<div class="a" style="left:6px;top:286px;width:4.6px;height:4.6px;background:#000;border:0.8px solid #ddd;box-sizing:border-box"></div>
<div class="a" style="left:4px;top:284px;width:4.6px;height:4.6px;background:#fff;border:0.8px solid #888;box-sizing:border-box"></div>
<!-- color / gradient / none -->
<div class="a" style="left:6px;top:296.5px;width:8.6px;height:8.6px;background:#fff;border:1px solid #222;box-sizing:border-box;outline:1px solid #5a5a5a"></div>
<div class="a" style="left:17.4px;top:296.5px;width:8.6px;height:8.6px;background:linear-gradient(90deg,#fff,#222);border:1px solid #222;box-sizing:border-box;outline:1px solid #5a5a5a"></div>
<div class="a" style="left:28.8px;top:296.5px;width:8.6px;height:8.6px;background:#fff;border:1px solid #222;box-sizing:border-box;outline:1px solid #5a5a5a"></div>
<svg class="a" style="left:28.8px;top:296.5px" width="9" height="9"><path d="M1.2 7.6L7.6 1.2" stroke="#d4203a" stroke-width="1.4"/></svg>
<!-- draw modes -->
<div class="a" style="left:5px;top:311px;width:34px;height:9px;background:#555;border:1px solid #2e2e2e;box-sizing:border-box"></div>
<div class="a" style="left:5px;top:311px;width:11px;height:9px;background:#2e2e2e"></div>
<div class="a" style="left:27.6px;top:311px;width:1px;height:9px;background:#2e2e2e"></div>
<svg class="a" style="left:5px;top:311px" width="34" height="9" viewBox="0 0 34 9" fill="none" stroke="#cfcfcf" stroke-width="0.8"><circle cx="4.6" cy="4" r="2.2"/><rect x="5" y="4.2" width="3.6" height="3" fill="#cfcfcf"/><circle cx="16.4" cy="4" r="2.4" fill="#9a9a9a"/><rect x="17" y="4.4" width="3.6" height="3"/><circle cx="27.6" cy="4.4" r="2.2" stroke="#777"/><circle cx="27.6" cy="4.4" r="0.8" stroke="#777"/></svg>
<!-- screen mode -->
<div class="a" style="left:17px;top:325px;width:10px;height:7px;border:1px solid #c8c8c8;box-sizing:border-box;background:#404040"></div>
<div class="a" style="left:13.4px;top:327.6px;width:10.6px;height:7px;border:1px solid #c8c8c8;box-sizing:border-box;background:#5a5a5a"></div>


<!-- ================= vertical scrollbar + dock ================= -->
<div class="a" id="vscroll"></div>
<div class="a" style="left:769.5px;top:53.5px;border:3px solid transparent;border-bottom:3.6px solid #e4e4e4;border-top:0"></div>
<div class="a" style="left:769.5px;top:409px;border:3px solid transparent;border-top:3.6px solid #e4e4e4;border-bottom:0"></div>
<div class="a" style="left:767.3px;top:221.7px;width:9px;height:9.5px;background:#8e8e8e"></div>
<div class="a" id="dock"></div>
<div class="a pnl" style="left:778.5px;top:45.5px;width:21.5px;height:38.5px"></div>
<div class="a pnl" style="left:778.5px;top:85.5px;width:21.5px;height:55.5px"></div>
<div class="a pnl" style="left:778.5px;top:142.5px;width:21.5px;height:55.5px"></div>
<div class="a pnl" style="left:778.5px;top:199.5px;width:21.5px;height:39px"></div>
<div class="a pnl" style="left:778.5px;top:240px;width:21.5px;height:39px"></div>
<div class="a" style="left:778.5px;top:280.5px;width:21.5px;height:144.5px;background:#424242"></div>
<div class="a" style="left:780px;top:182px;width:17px;height:14px;background:#2b2b2b;border:1px solid #222;box-sizing:border-box;border-radius:1.5px"></div>
<svg class="a" style="left:778px;top:44px" width="22" height="240" viewBox="778 44 22 240" fill="none" stroke="#d0d0d0" stroke-width="0.9">
<g stroke="#262626" stroke-width="1.4"><path d="M784 48H794M784 89H794M784 146H794M784 203H794M784 243.4H794"/></g>
<!-- color palette -->
<path d="M783 58.6Q783 54.2 789 53.6Q795.4 53.6 795.4 57.6Q795.4 59.4 792.6 59.2Q791 59.2 791.4 60.6Q791.6 62.4 788.6 62.2Q783 62 783 58.6Z" fill="#cfcfcf" stroke="none"/>
<circle cx="786" cy="58.4" r="1" fill="#444" stroke="none"/><circle cx="788" cy="55.8" r="1" fill="#444" stroke="none"/><circle cx="791.4" cy="55.6" r="1" fill="#444" stroke="none"/><circle cx="793.6" cy="57.4" r="0.9" fill="#444" stroke="none"/>
<!-- color guide -->
<defs><linearGradient id="cg" x1="0" y1="0" x2="1" y2="1"><stop offset="0" stop-color="#f0f0f0"/><stop offset="1" stop-color="#555"/></linearGradient></defs>
<path d="M784.4 70V80.4H794.4Q794 71.4 784.4 70Z" fill="url(#cg)" stroke="#d8d8d8" stroke-width="0.7"/>
<!-- swatches -->
<rect x="784" y="96.4" width="9.6" height="6.2" fill="#d0d0d0" stroke="none"/>
<g fill="#333" stroke="none"><rect x="785" y="97.2" width="2" height="2"/><rect x="787.8" y="97.2" width="2" height="2"/><rect x="790.6" y="97.2" width="2" height="2" fill="#777"/><rect x="785" y="100" width="2" height="2" fill="#777"/><rect x="787.8" y="100" width="2" height="2" fill="#777"/><rect x="790.6" y="100" width="2" height="2"/></g>
<!-- brushes -->
<rect x="786.6" y="116.6" width="4.6" height="4.6" fill="#c8c8c8" stroke="none"/>
<path d="M788.8 116V111M787.2 116L785.6 112.4M790.6 116L792.2 112.4" stroke-width="1"/><circle cx="788.8" cy="110.8" r="0.9" fill="#d8d8d8" stroke="none"/><circle cx="785.4" cy="112" r="0.9" fill="#d8d8d8" stroke="none"/><circle cx="792.4" cy="112" r="0.9" fill="#d8d8d8" stroke="none"/>
<!-- symbols (club) -->
<g fill="#d0d0d0" stroke="none"><circle cx="788.8" cy="129.8" r="2.3"/><circle cx="786.4" cy="132.8" r="2.3"/><circle cx="791.2" cy="132.8" r="2.3"/><path d="M788.2 132H789.4L790.4 136.6H787.2Z"/></g>
<!-- stroke -->
<g fill="#d0d0d0" stroke="none"><rect x="784" y="152.8" width="10" height="0.9"/><rect x="784" y="155" width="10" height="1.6"/><rect x="784" y="158" width="10" height="2.2"/></g>
<!-- gradient -->
<defs><linearGradient id="dg" x1="0" x2="1"><stop offset="0" stop-color="#333"/><stop offset="1" stop-color="#e0e0e0"/></linearGradient></defs>
<rect x="784.2" y="169" width="9.6" height="6.8" fill="url(#dg)" stroke="#d8d8d8" stroke-width="0.8"/>
<!-- transparency -->
<circle cx="787.2" cy="187.6" r="3.1" fill="#b8b8b8" stroke="#d8d8d8" stroke-width="0.8"/><circle cx="790" cy="190.2" r="3.1" fill="#6a6a6a" stroke="#d8d8d8" stroke-width="0.8"/>
<!-- appearance -->
<circle cx="789" cy="213.4" r="2.8" fill="#c8c8c8" stroke="none"/><circle cx="789" cy="213.4" r="4.2" stroke-width="0.8" stroke-dasharray="1 0.8"/>
<!-- graphic styles -->
<rect x="786.6" y="225" width="7.4" height="7.4" stroke-width="0.9"/><rect x="784" y="228.4" width="5.4" height="5" fill="#444" stroke-width="0.8"/><circle cx="786.6" cy="231.2" r="1.2" fill="#d0d0d0" stroke="none"/>
<!-- layers -->
<path d="M789 248.6L794.4 251.4L789 254.2L783.6 251.4Z" fill="#e0e0e0" stroke="none"/><path d="M784 254.2L789 256.8L794 254.2" stroke="#e0e0e0" stroke-width="1.2"/>
<!-- artboards -->
<rect x="784" y="265" width="6.6" height="6.6" stroke-width="0.9"/><rect x="787.2" y="268.4" width="6.6" height="6.6" fill="#444" stroke-width="0.9"/>
</svg>

<svg class="a" style="left:792.4px;top:39.6px" width="6" height="5" viewBox="0 0 6 5"><path d="M2.6 0.4V4.6L0.4 2.5ZM5.4 0.4V4.6L3.2 2.5Z" fill="#c4c4c4"/></svg>
<!-- ================= Transform panel ================= -->
<div class="a" style="left:629px;top:55.5px;width:135.5px;height:67px;background:#474747;border-radius:2px;box-shadow:0 0 0 0.5px #222"></div>
<div class="a" style="left:629px;top:55.5px;width:135.5px;height:7.5px;background:#262626;border-radius:2px 2px 0 0"></div>
<div class="a" style="left:629px;top:63px;width:135.5px;height:9.5px;background:#353535"></div>
<div class="a" style="left:629px;top:63px;width:39.5px;height:9.5px;background:#474747"></div>
<div class="a" style="left:691.5px;top:63px;width:1px;height:9.5px;background:#2a2a2a"></div>
<div class="a" style="left:730px;top:63px;width:1px;height:9.5px;background:#2a2a2a"></div>
<div class="a" style="left:730.5px;top:63px;width:34px;height:9.5px;background:#3f3f3f"></div>
<svg style="position:absolute;left:631.6px;top:64.4px" width="4" height="7" viewBox="0 0 4 7"><path d="M2 0.4L3.8 2.8H0.2ZM2 6.6L3.8 4.2H0.2Z" fill="#e0e0e0"/></svg><div class="t" style="left:637px;top:65.4px;font-size:5.9px;font-weight:bold;color:#f0f0f0">Transform</div>
<div class="t" style="left:673.6px;top:65.4px;font-size:5.8px;font-weight:bold;color:#a8a8a8">Align</div>
<div class="t" style="left:697px;top:65.4px;font-size:5.8px;font-weight:bold;color:#a8a8a8">Pathfinder</div>
<svg class="a" style="left:747.5px;top:57.2px" width="7" height="5" viewBox="0 0 7 5"><path d="M3 0.4V4.6L0.4 2.5ZM6.4 0.4V4.6L3.8 2.5Z" fill="#d4d4d4"/></svg>
<svg class="a" style="left:757px;top:57px" width="5" height="5" viewBox="0 0 5 5"><path d="M0.8 0.8L4.2 4.2M4.2 0.8L0.8 4.2" stroke="#ddd" stroke-width="0.9"/></svg>
<svg class="a" style="left:753px;top:65px" width="9" height="6" viewBox="0 0 9 6"><path d="M0.4 1.6H3L1.7 3.4Z" fill="#d0d0d0"/><path d="M4 0.9H8.4M4 3H8.4M4 5.1H8.4" stroke="#b8b8b8" stroke-width="0.7"/></svg>
<!-- reference point icon -->
<svg class="a" style="left:632px;top:84.5px" width="13" height="12" viewBox="0 0 13 12" fill="#474747" stroke="#d8d8d8" stroke-width="0.7"><path d="M2 2H11V10H2ZM2 6H11M6.5 2V10" fill="none" stroke="#b0b0b0" stroke-width="0.5"/><g><rect x="0.8" y="0.8" width="2.6" height="2.4"/><rect x="5.2" y="0.8" width="2.6" height="2.4"/><rect x="9.6" y="0.8" width="2.6" height="2.4"/><rect x="0.8" y="4.8" width="2.6" height="2.4"/><rect x="5.2" y="4.8" width="2.6" height="2.4" fill="#e8e8e8"/><rect x="9.6" y="4.8" width="2.6" height="2.4"/><rect x="0.8" y="8.8" width="2.6" height="2.4"/><rect x="5.2" y="8.8" width="2.6" height="2.4"/><rect x="9.6" y="8.8" width="2.6" height="2.4"/></g></svg>
<div class="t" style="left:652px;top:80.6px;font-size:5.7px;color:#7c7c7c">X:</div>
<div class="t" style="left:652px;top:95.6px;font-size:5.7px;color:#7c7c7c">Y:</div>
<div class="t" style="left:697px;top:80.6px;font-size:5.7px;color:#7c7c7c">W:</div>
<div class="t" style="left:698px;top:95.6px;font-size:5.7px;color:#7c7c7c">H:</div>
<div class="a fld" style="left:661px;top:78px;width:32.5px;height:10px;background:#636363;border-color:#3a3a3a"></div>
<div class="a fld" style="left:707.5px;top:78px;width:32.5px;height:10px;background:#636363;border-color:#3a3a3a"></div>
<div class="a fld" style="left:661px;top:93px;width:32.5px;height:10px;background:#636363;border-color:#3a3a3a"></div>
<div class="a fld" style="left:707.5px;top:93px;width:32.5px;height:10px;background:#636363;border-color:#3a3a3a"></div>
<div class="t" style="left:663.5px;top:80.8px;font-size:5.7px;color:#000;-webkit-text-stroke:0.2px #222">0 cm</div>
<div class="t" style="left:710px;top:80.8px;font-size:5.7px;color:#000;-webkit-text-stroke:0.2px #222">0 cm</div>
<div class="t" style="left:663.5px;top:95.8px;font-size:5.7px;color:#000;-webkit-text-stroke:0.2px #222">0 cm</div>
<div class="t" style="left:710px;top:95.8px;font-size:5.7px;color:#000;-webkit-text-stroke:0.2px #222">0 cm</div>
<div class="a" style="left:743px;top:83px;width:14px;height:13.5px;background:#2b2b2b;border:1px solid #252525;box-sizing:border-box;border-radius:1px"></div>
<svg class="a" style="left:746.5px;top:85px" width="7" height="10" viewBox="0 0 7 10" fill="none" stroke="#d8d8d8" stroke-width="1"><rect x="2" y="0.8" width="3.4" height="4.4" rx="1.6"/><rect x="1.6" y="4.8" width="3.4" height="4.4" rx="1.6"/></svg>
<div class="a fld" style="left:661px;top:108px;width:23px;height:10px;background:#666;border-color:#3a3a3a"></div>
<div class="a dd dg" style="left:684px;top:108px;width:8.5px;height:10px;background:#6c6c6c"></div>
<div class="a fld" style="left:707.5px;top:108px;width:23px;height:10px;background:#666;border-color:#3a3a3a"></div>
<div class="a dd dg" style="left:730.5px;top:108px;width:8.5px;height:10px;background:#6c6c6c"></div>
<div class="t" style="left:663px;top:110.6px;font-size:5.6px;color:#333">0°</div>
<div class="t" style="left:710px;top:110.6px;font-size:5.6px;color:#333">0°</div>
<svg class="a" style="left:649px;top:109px" width="10" height="8" viewBox="0 0 10 8" fill="none" stroke="#6c6c6c" stroke-width="0.8"><path d="M1 7H8M1 7L6 1.4"/><path d="M8.8 5.4v0.2M8.8 7v0.2" stroke-width="0.9"/></svg>
<svg class="a" style="left:695px;top:109px" width="11" height="8" viewBox="0 0 11 8" fill="none" stroke="#6c6c6c" stroke-width="0.8"><path d="M1 7L3.6 1.4H8.6L6 7Z"/><path d="M9.8 5.4v0.2M9.8 7v0.2" stroke-width="0.9"/></svg>

<!-- ================= Transparency panel ================= -->
<div class="a" style="left:641.5px;top:141px;width:135.5px;height:73px;background:#454545;box-shadow:0 0 0 0.5px #222"></div>
<div class="a" style="left:641.5px;top:141px;width:135.5px;height:12.5px;background:#2c2c2c"></div>
<div class="a" style="left:691px;top:143.5px;width:47px;height:10px;background:#454545"></div>
<div class="a" style="left:668px;top:144px;width:1px;height:9.5px;background:#242424"></div>
<div class="t" style="left:646px;top:146.2px;font-size:5.8px;font-weight:bold;color:#a4a4a4">Stroke</div>
<div class="a" style="left:669px;top:144px;width:22px;height:9.5px;overflow:hidden"><div class="t" style="left:0.4px;top:2.2px;font-size:5.8px;font-weight:bold;color:#a4a4a4">Gradient</div></div>
<svg style="position:absolute;left:692.6px;top:145.2px" width="4" height="7" viewBox="0 0 4 7"><path d="M2 0.4L3.8 2.8H0.2ZM2 6.6L3.8 4.2H0.2Z" fill="#e0e0e0"/></svg><div class="t" style="left:698px;top:146.2px;font-size:5.6px;font-weight:bold;color:#f0f0f0">Transparency</div>
<svg class="a" style="left:753px;top:146.2px" width="7" height="5" viewBox="0 0 7 5"><path d="M0.6 0.4V4.6L3.2 2.5ZM4 0.4V4.6L6.6 2.5Z" fill="#e0e0e0"/></svg>
<div class="a" style="left:762px;top:144.5px;width:1px;height:8px;background:repeating-linear-gradient(#666 0 1px,#2c2c2c 1px 2px)"></div>
<svg class="a" style="left:766px;top:146px" width="9" height="6" viewBox="0 0 9 6"><path d="M0.4 1.6H3L1.7 3.4Z" fill="#d0d0d0"/><path d="M4 0.9H8.4M4 3H8.4M4 5.1H8.4" stroke="#b8b8b8" stroke-width="0.7"/></svg>
<div class="a" style="left:645.5px;top:157.5px;width:55px;height:10.5px;background:#555;border:1px solid #333;box-sizing:border-box;border-radius:1px"></div>
<div class="a" style="left:689.5px;top:158.5px;width:1px;height:8.5px;background:#3c3c3c"></div>
<div class="a" style="left:692.5px;top:161.5px;border:2.6px solid transparent;border-top:3px solid #e6e6e6;border-bottom:0"></div>
<div class="t" style="left:649px;top:160.4px;font-size:5.7px;color:#e0e0e0">Normal</div>
<div class="t" style="left:713px;top:160.4px;font-size:5.7px;color:#e0e0e0">Opacity:</div>
<div class="a" style="left:737px;top:157.5px;width:27px;height:10.5px;background:linear-gradient(90deg,#8a8a8a,#a8a8a8);border:1px solid #2e2e2e;box-sizing:border-box"></div>
<div class="t" style="left:739px;top:160.4px;font-size:5.8px;color:#000;-webkit-text-stroke:0.25px #111">100%</div>
<div class="a dd" style="left:764.5px;top:157.5px;width:9px;height:10.5px"></div>
<div class="a" style="left:645.5px;top:177px;width:77px;height:32px;background:#4a4a4a;border:1px solid #353535;box-sizing:border-box"></div>
<div class="a" style="left:726px;top:177px;width:46.5px;height:10.5px;background:#4d4d4d;border:1px solid #3a3a3a;box-sizing:border-box;border-radius:1px"></div>
<div class="t" style="left:734.5px;top:180px;font-size:5.7px;color:#757575">Make Mask</div>
<div class="a" style="left:726px;top:192px;width:7.5px;height:7.5px;background:#4c4c4c;border:1px solid #383838;box-sizing:border-box"></div>
<div class="t" style="left:735.5px;top:193.4px;font-size:5.7px;color:#787878">Clip</div>
<div class="a" style="left:726px;top:203px;width:7.5px;height:7.5px;background:#4c4c4c;border:1px solid #383838;box-sizing:border-box"></div>
<div class="t" style="left:735.5px;top:204.4px;font-size:5.7px;color:#787878">Invert Mask</div>


<!-- ================= status bar / h-scroll ================= -->
<div class="a" id="hscroll"></div>
<div class="a" style="left:0;top:416px;width:43px;height:9px;background:#404040"></div>
<div class="a" style="left:43px;top:416px;width:247px;height:9px;background:#454545"></div>
<div class="a" style="left:767px;top:416px;width:11px;height:9px;background:#383838"></div>
<div class="a" style="left:45.5px;top:416.5px;width:25px;height:8.5px;background:#8c8c8c;border:1px solid #2e2e2e;box-sizing:border-box"></div>
<div class="t" style="left:48px;top:418.5px;font-size:5.6px;color:#000;-webkit-text-stroke:0.25px #111">400%</div>
<div class="a dd" style="left:71px;top:416.5px;width:8px;height:8.5px;background:#4a4a4a"></div>
<svg class="a" style="left:82px;top:417px" width="82" height="8" viewBox="82 417 82 8" fill="#606060"><path d="M89.4 418.4L86 421L89.4 423.6Z"/><rect x="85" y="418.4" width="1" height="5.2"/><path d="M99.4 418.4L96 421L99.4 423.6Z"/><path d="M143.6 418.4L147 421L143.6 423.6Z"/><path d="M153.6 418.4L157 421L153.6 423.6Z"/><rect x="157" y="418.4" width="1" height="5.2"/></svg>
<div class="a" style="left:105px;top:416.5px;width:24.5px;height:8.5px;background:#8c8c8c;border:1px solid #2e2e2e;box-sizing:border-box"></div>
<div class="t" style="left:107px;top:418.5px;font-size:5.6px;color:#000;-webkit-text-stroke:0.25px #111">1</div>
<div class="a dd" style="left:130px;top:416.5px;width:8px;height:8.5px;background:#4a4a4a"></div>
<div class="t" style="left:209.6px;top:418.3px;font-size:5.5px;color:#e8e8e8">Selection</div>
<div class="a" style="left:283.6px;top:418px;border:3px solid transparent;border-left:3.6px solid #e4e4e4;border-right:0"></div>
<div class="a" style="left:290px;top:416px;width:1px;height:9px;background:#252525"></div>
<div class="a" style="left:294px;top:418px;border:3px solid transparent;border-right:3.6px solid #e4e4e4;border-left:0"></div>
<div class="a" style="left:758.6px;top:418px;border:3px solid transparent;border-left:3.6px solid #e4e4e4;border-right:0"></div>
<div class="a" style="left:524.5px;top:416.5px;width:9.5px;height:8.5px;background:#8c8c8c"></div>

<!-- ================= windows taskbar ================= -->
<div class="a" id="taskbar"></div>
<div class="a" style="left:0;top:425px;width:800px;height:1px;background:rgba(150,190,215,0.55)"></div>
<svg class="a" style="left:0;top:425px" width="800" height="24" viewBox="0 425 800 24">
<defs>
<radialGradient id="orb" cx="0.5" cy="0.35" r="0.7"><stop offset="0" stop-color="#7fc4ee"/><stop offset="0.55" stop-color="#2a78b8"/><stop offset="1" stop-color="#0d3a66"/></radialGradient>
<linearGradient id="glass" x1="0" y1="0" x2="0" y2="1"><stop offset="0" stop-color="#9cc4dc" stop-opacity="0.55"/><stop offset="1" stop-color="#5a8cab" stop-opacity="0.35"/></linearGradient>
<linearGradient id="fold" x1="0" y1="0" x2="0" y2="1"><stop offset="0" stop-color="#f7e7a0"/><stop offset="1" stop-color="#e6c766"/></linearGradient>
<linearGradient id="tray" x1="0" y1="0" x2="0" y2="1"><stop offset="0" stop-color="#3c586a"/><stop offset="0.35" stop-color="#556f7f"/><stop offset="1" stop-color="#647c8a"/></linearGradient>
</defs>
<!-- faint wallpaper streaks -->
<path d="M330 449L400 425H440L380 449Z" fill="#2f7a98" opacity="0.3"/><path d="M470 449L520 425H550L510 449Z" fill="#2f7a98" opacity="0.25"/><path d="M280 449L300 425H330L300 449Z" fill="#13405e" opacity="0.3"/>
<path d="M530 449Q600 441 650 441Q656 437 668 436.6H800V449Z" fill="url(#tray)"/>
<path d="M640 449L650 426H656L648 449Z" fill="#1f6a7a" opacity="0.3"/>
<!-- start orb -->
<circle cx="15.8" cy="437.6" r="10.6" fill="url(#orb)" stroke="#123a5c" stroke-width="1"/>
<path d="M9.6 433.6Q12 432 14.6 433.4L13.8 437.2Q11.4 436 8.8 437.4Z" fill="#e8583a"/>
<path d="M16 433.2Q18.6 434.6 21.4 433L20.6 436.8Q18 438.2 15.2 436.8Z" fill="#8ec83e"/>
<path d="M8.4 438.8Q11 437.4 13.6 438.8L12.8 442.6Q10.4 441.4 7.6 442.8Z" fill="#3a9ae0"/>
<path d="M14.8 438.6Q17.6 440 20.2 438.4L19.4 442.2Q16.8 443.6 14 442.4Z" fill="#f4c83a"/>
<!-- separators -->
<g stroke="#0c2d46" stroke-width="1" opacity="0.8"><path d="M35 426V449M68.6 426V449M103.6 426V449"/></g>
<g stroke="#5d8aa6" stroke-width="0.6" opacity="0.7"><path d="M36 426V449M69.6 426V449"/></g>
<!-- folder -->
<path d="M42.6 431.4Q42.6 430 44 430H49L50.6 431.8H60.4Q61.8 431.8 61.8 433.2V444.6H42.6Z" fill="url(#fold)" stroke="#c9a84a" stroke-width="0.5"/>
<rect x="45" y="433" width="14.4" height="6" fill="#f4f7fa" stroke="#c8d2da" stroke-width="0.4"/>
<path d="M42.6 436.4H61.8V444.6Q61.8 445.6 60.8 445.6H43.6Q42.6 445.6 42.6 444.6Z" fill="#f2dc8c" stroke="#c9a84a" stroke-width="0.4"/>
<path d="M46 440.6H58.4V445.4H46Z" fill="#7cc0e8" stroke="#4a94c4" stroke-width="0.5"/><path d="M48 442.4H56.4" stroke="#e8f4fc" stroke-width="1"/>
<!-- coc coc -->
<circle cx="86" cy="437.4" r="9.2" fill="#6ab24a"/><circle cx="86" cy="437.4" r="9.2" fill="none" stroke="#3f8a2c" stroke-width="0.6"/>
<circle cx="86" cy="437.8" r="4.4" fill="none" stroke="#fff" stroke-width="2.2"/><circle cx="86" cy="437.8" r="1.6" fill="#dff0c8"/>
<path d="M88.6 431L91.4 427.4M90.6 433L94.6 430.4M91.4 436L95.6 435" stroke="#fff" stroke-width="1.8" stroke-linecap="round"/>
<path d="M89.4 429.6L91 427.6M92.4 431.8L94.2 430.6" stroke="#f0a030" stroke-width="1.2" stroke-linecap="round"/>
<!-- Ai active button -->
<rect x="105" y="426" width="32.6" height="22.6" rx="1.6" fill="url(#glass)" stroke="#a8cfe4" stroke-width="0.7" stroke-opacity="0.8"/>
<rect x="114" y="428.4" width="16" height="15.6" fill="#2c1804" stroke="#e9a23b" stroke-width="1.2"/>
<text x="122" y="440.4" font-family="Liberation Sans, sans-serif" font-size="10" font-weight="bold" fill="#f0a83c" text-anchor="middle">Ai</text>
<!-- Ps -->
<rect x="149.4" y="428.8" width="15.6" height="15" fill="#0d2450" stroke="#8cc8f4" stroke-width="1.2"/>
<text x="157.2" y="440.2" font-family="Liberation Sans, sans-serif" font-size="9.4" font-weight="bold" fill="#9fd2f8" text-anchor="middle">Ps</text>
<!-- IE -->
<text x="192.4" y="444.6" font-family="Liberation Sans, sans-serif" font-size="24" font-weight="bold" fill="#4fb8ee" text-anchor="middle">e</text>
<path d="M184.4 441.6Q181.6 436.6 189 431Q195 427 199.6 428.4" fill="none" stroke="#f2c230" stroke-width="1.5" stroke-linecap="round"/>
<!-- orange/blue app -->
<rect x="219" y="428.8" width="16.6" height="16" rx="1.2" fill="#eef4fa" stroke="#9cb8d0" stroke-width="0.5"/>
<path d="M219 428.8H226L221 436H219Z" fill="#3f88d0"/>
<path d="M220.4 443.4Q220.6 438.4 225 438.8Q228 439 229.4 434.6Q230.6 430.4 235 429.6V434Q232 436 231 439.6Q229.6 443.6 225 443Q222 442.8 220.4 443.4Z" fill="#f09a24"/>
<!-- paint button -->
<rect x="245.8" y="426" width="33" height="22.6" rx="1.6" fill="#6aa0bc" fill-opacity="0.28" stroke="#8ab8d0" stroke-width="0.6" stroke-opacity="0.7" stroke-dasharray="1.2 0.8"/>
<path d="M253.6 440Q252.6 433.2 260 431.2Q268.6 429.8 270.6 435.6Q271.6 441.6 265.4 444.6Q263 445.4 262.6 443.4Q262.6 441.4 260.4 441.8Q255 443.4 253.6 440Z" fill="#e8eef4" stroke="#7a94a8" stroke-width="0.6"/>
<circle cx="257.4" cy="437.8" r="1.3" fill="#3a9ae0"/><circle cx="259.6" cy="434.4" r="1.3" fill="#e8583a"/><circle cx="263.6" cy="433.4" r="1.3" fill="#f4c83a"/><circle cx="267" cy="435.4" r="1.3" fill="#6ab24a"/>
<path d="M263.6 443.6L268.6 430.4" stroke="#d09a40" stroke-width="1.4" stroke-linecap="round"/><path d="M268.4 431L269.6 427.8" stroke="#f0d890" stroke-width="1.6" stroke-linecap="round"/>
<!-- tray -->
<text x="675" y="439.4" font-family="Liberation Sans, sans-serif" font-size="6.4" fill="#f2f2f2">EN</text>
<path d="M693.6 439L695.6 436.6L697.6 439Z" fill="#eaeaea"/>
<path d="M706.4 433V443" stroke="#f0f0f0" stroke-width="1"/><path d="M707 433.4H712.6L711.4 435.4L712.6 437.6H707Z" fill="#f4f4f4"/>
<circle cx="712" cy="440.6" r="2.7" fill="#e02a2a"/><path d="M710.8 439.4L713.2 441.8M713.2 439.4L710.8 441.8" stroke="#fff" stroke-width="0.8"/>
<rect x="722" y="435" width="6.6" height="5.4" fill="#3a8ad0" stroke="#e8f0f8" stroke-width="0.8"/><rect x="719.6" y="433" width="5" height="4" fill="#cfe4f4" stroke="#e8f0f8" stroke-width="0.5"/><path d="M722.6 441.4H728M725.4 440.4V442.4" stroke="#e8f0f8" stroke-width="0.8"/>
<path d="M734 437H735.8L738.4 434.4V443.2L735.8 440.6H734Z" fill="#f0f0f0"/><path d="M740 436.4Q741.4 438.8 740 441.2M741.6 435Q743.6 438.8 741.6 442.6" fill="none" stroke="#e8e8e8" stroke-width="0.6"/>
<text x="782" y="435" font-family="Liberation Sans, sans-serif" font-size="6.86" fill="#f4f4f4" text-anchor="end">10:37 AM</text>
<text x="783.4" y="446" font-family="Liberation Sans, sans-serif" font-size="6.86" fill="#f4f4f4" text-anchor="end">8/12/2016</text>
<rect x="794" y="425" width="6" height="24" fill="#8aa4b4" opacity="0.35"/><path d="M793.6 426V449" stroke="#0c2d46" stroke-width="0.8" opacity="0.6"/>
</svg>


</body></html>
